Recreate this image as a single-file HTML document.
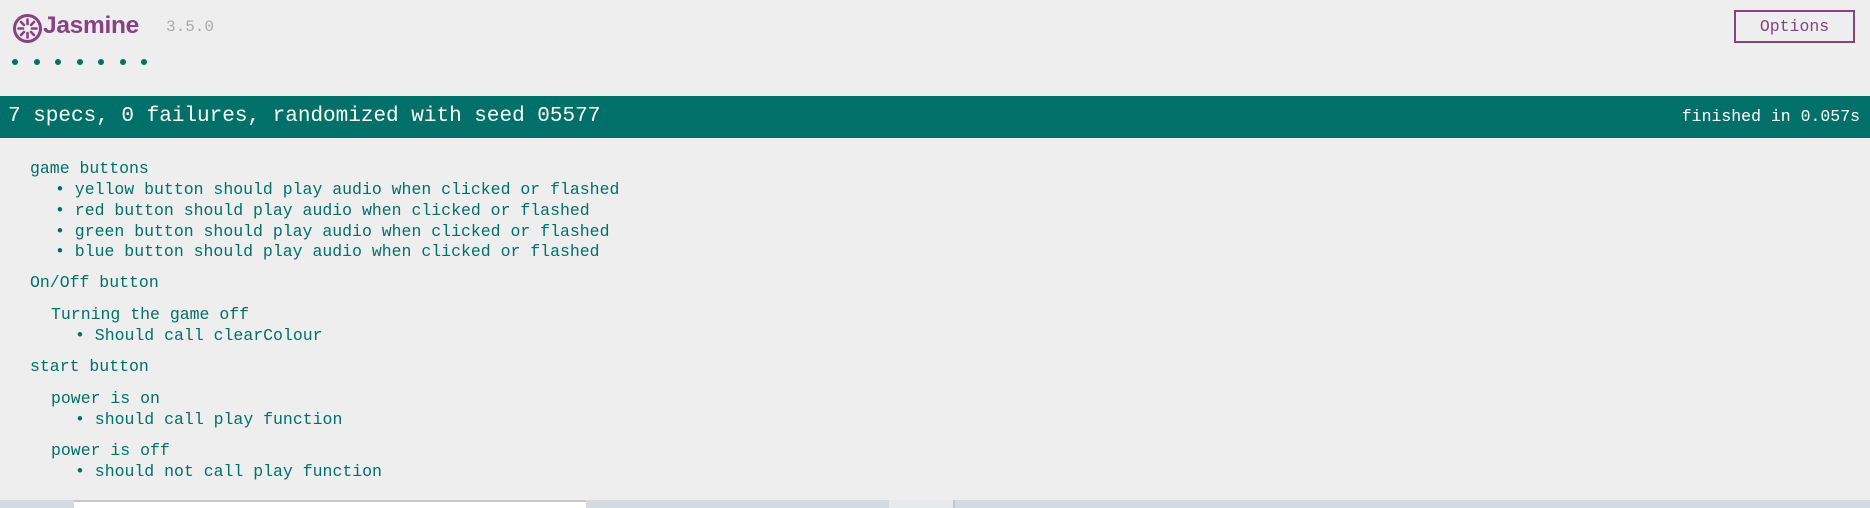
<!DOCTYPE html>
<html><head><meta charset="utf-8"><style>
body{margin:0;width:1870px;height:508px;background:#eee;position:relative;overflow:hidden;font-family:"Liberation Mono",monospace;color:#007069}
.a{position:absolute;white-space:pre;line-height:20px;font-size:16.5px}
.b{position:absolute;width:6px;height:6px;border-radius:50%;background:#007069}
</style></head><body>
<svg style="position:absolute;left:12px;top:13px" width="31" height="31" viewBox="0 0 31 31">
<circle cx="15.5" cy="15.5" r="13" fill="none" stroke="#8a4182" stroke-width="3"/>
<g stroke="#8a4182" stroke-width="2.6" stroke-linecap="round">
<line x1="15.5" y1="6.5" x2="15.5" y2="11"/><line x1="15.5" y1="20" x2="15.5" y2="24.5"/>
<line x1="6.5" y1="15.5" x2="11" y2="15.5"/><line x1="20" y1="15.5" x2="24.5" y2="15.5"/>
<line x1="9" y1="9" x2="12" y2="12"/><line x1="19" y1="19" x2="22" y2="22"/>
<line x1="22" y1="9" x2="19" y2="12"/><line x1="12" y1="19" x2="9" y2="22"/></g></svg>
<div style="position:absolute;left:43px;top:12px;font:bold 24.5px 'Liberation Sans',sans-serif;color:#8a4182;letter-spacing:-0.3px">Jasmine</div>
<div class="a" style="left:166px;top:17px;color:#aaa;font-size:16px">3.5.0</div>
<div class="b" style="left:12px;top:59px"></div><div class="b" style="left:34px;top:59px"></div><div class="b" style="left:55px;top:59px"></div><div class="b" style="left:77px;top:59px"></div><div class="b" style="left:98px;top:59px"></div><div class="b" style="left:120px;top:59px"></div><div class="b" style="left:141px;top:59px"></div>
<div style="position:absolute;left:1734px;top:10px;width:117px;height:29px;border:2px solid #8a4182;color:#8a4182;font-size:16.5px;text-align:center;line-height:29px">Options</div>
<div style="position:absolute;left:0;top:96px;width:1870px;height:42px;background:#007069;color:#fff;line-height:42px">
<span style="position:absolute;left:8px;font-size:21px">7 specs, 0 failures, randomized with seed 05577</span>
<span style="position:absolute;right:10px;font-size:16.5px">finished in 0.057s</span></div>
<div class="a" style="left:30px;top:159px">game buttons</div>
<div class="a" style="left:55px;top:180px">• yellow button should play audio when clicked or flashed</div>
<div class="a" style="left:55px;top:201px">• red button should play audio when clicked or flashed</div>
<div class="a" style="left:55px;top:222px">• green button should play audio when clicked or flashed</div>
<div class="a" style="left:55px;top:242px">• blue button should play audio when clicked or flashed</div>
<div class="a" style="left:30px;top:273px">On/Off button</div>
<div class="a" style="left:51px;top:305px">Turning the game off</div>
<div class="a" style="left:75px;top:326px">• Should call clearColour</div>
<div class="a" style="left:30px;top:357px">start button</div>
<div class="a" style="left:51px;top:389px">power is on</div>
<div class="a" style="left:75px;top:410px">• should call play function</div>
<div class="a" style="left:51px;top:441px">power is off</div>
<div class="a" style="left:75px;top:462px">• should not call play function</div>
<div style="position:absolute;left:0;top:500px;width:1870px;height:8px;background:#d3dae2"></div>
<div style="position:absolute;left:74px;top:500px;width:512px;height:8px;background:#fff;border-top:2px solid #c8c8c8;box-sizing:border-box"></div>
<div style="position:absolute;left:889px;top:500px;width:64px;height:8px;background:#e6e9ed"></div>
<div style="position:absolute;left:953px;top:500px;width:2px;height:8px;background:#c0c6cc"></div>
</body></html>
